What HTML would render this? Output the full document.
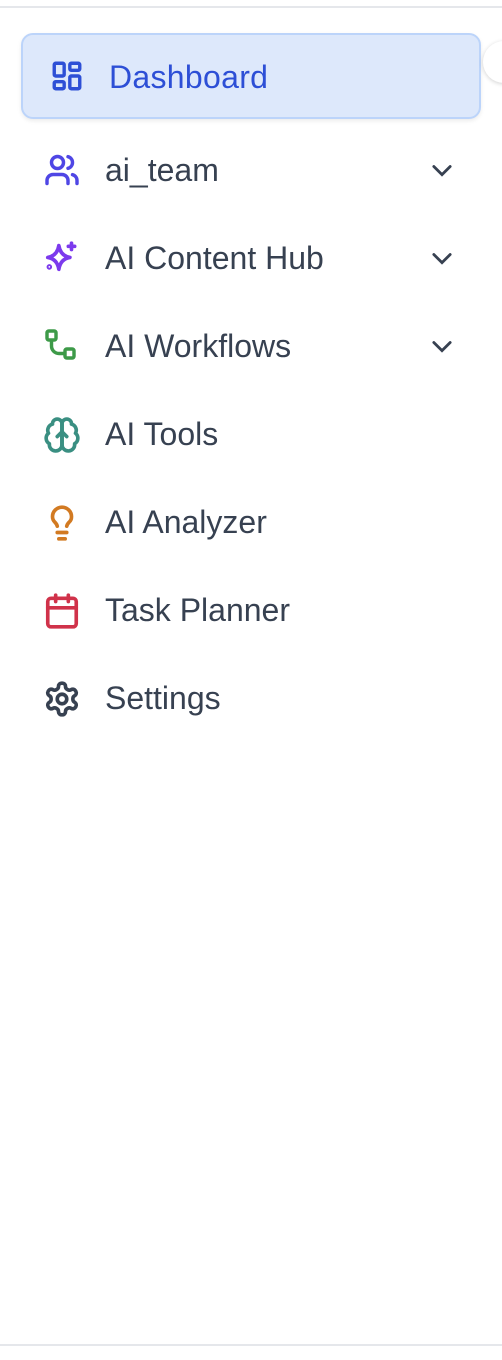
<!DOCTYPE html>
<html><head><style>
body{margin:0;width:502px;height:1360px;background:#fff;font-family:"Liberation Sans",Arial,sans-serif;position:relative;overflow:hidden}
.hl{position:absolute;left:0;width:502px;height:2px;background:#e5e7eb}
.dash{position:absolute;left:21px;top:33px;width:456px;height:82px;background:#dde8fb;border:2px solid #bcd4fa;border-radius:12px;box-shadow:0 2px 4px rgba(0,0,0,.08)}
.dash svg{position:absolute;left:27px;top:24px}
.dash span{position:absolute;left:86px;top:24px;font-size:32px;color:#2d4fd6;font-weight:500;letter-spacing:.3px}
.circ{position:absolute;left:483px;top:41px;width:42px;height:42px;border-radius:50%;background:#fff;box-shadow:0 1px 4px rgba(0,0,0,.18)}
.item{position:absolute;left:0;width:502px;height:40px}
.item svg.ic{position:absolute;left:43px;top:2px}
.item span{position:absolute;left:105px;top:2px;font-size:32px;color:#374151}
.item svg.ch{position:absolute;left:428px;top:6px}
</style></head><body>
<div class="hl" style="top:6px"></div>
<div class="hl" style="top:1344px"></div>
<div class="dash">
<svg width="34" height="34" viewBox="0 0 24 24" fill="none" stroke="#2d4fd6" stroke-width="2.4"><rect x="3" y="3" width="7" height="9" rx="1"/><rect x="14" y="3" width="7" height="5" rx="1"/><rect x="14" y="12" width="7" height="9" rx="1"/><rect x="3" y="16" width="7" height="5" rx="1"/></svg>
<span>Dashboard</span></div>
<div class="circ"></div>

<div class="item" style="top:150px"><svg class="ic" width="38" height="36" viewBox="0 0 24 24" fill="none" stroke="#4f46e5" stroke-width="2.3" stroke-linecap="round"><path d="M16 21v-2a4 4 0 0 0-4-4H6a4 4 0 0 0-4 4v2"/><circle cx="9" cy="7" r="4"/><path d="M22 21v-2a4 4 0 0 0-3-3.87M16 3.13a4 4 0 0 1 0 7.75"/></svg><span>ai_team</span><svg class="ch" width="28" height="28" viewBox="0 0 24 24" fill="none" stroke="#374151" stroke-width="2.4" stroke-linecap="round"><path d="M5 9l7 7 7-7"/></svg></div>

<div class="item" style="top:238px"><svg class="ic" width="38" height="38" viewBox="0 0 24 24" fill="none" stroke="#7c3aed" stroke-width="2.3" stroke-linecap="round" stroke-linejoin="round"><path d="M10 3.5 Q11 10 17 11 Q11 12 10 18.5 Q9 12 3 11 Q9 10 10 3.5Z"/><path d="M18 2v4M16 4h4"/><circle cx="4" cy="17" r=".6"/></svg><span>AI Content Hub</span><svg class="ch" width="28" height="28" viewBox="0 0 24 24" fill="none" stroke="#374151" stroke-width="2.4" stroke-linecap="round"><path d="M5 9l7 7 7-7"/></svg></div>

<div class="item" style="top:326px"><svg class="ic" width="38" height="36" viewBox="0 0 24 24" fill="none" stroke="#3d9a48" stroke-width="2.3" stroke-linejoin="round"><rect x="2" y="2" width="6" height="6" rx="1.2"/><rect x="14" y="14" width="6" height="6" rx="1.2"/><path d="M5 8v4a5 5 0 0 0 5 5h4"/></svg><span>AI Workflows</span><svg class="ch" width="28" height="28" viewBox="0 0 24 24" fill="none" stroke="#374151" stroke-width="2.4" stroke-linecap="round"><path d="M5 9l7 7 7-7"/></svg></div>

<div class="item" style="top:414px"><svg class="ic" width="38" height="38" viewBox="0 0 24 24" fill="none" stroke="#3a8f82" stroke-width="2.3" stroke-linecap="round" stroke-linejoin="round"><path d="M12 5a3 3 0 1 0-5.99.13 4 4 0 0 0-2.53 5.77 4 4 0 0 0 .56 6.6A4 4 0 1 0 12 18Z"/><path d="M12 5a3 3 0 1 1 5.99.13 4 4 0 0 1 2.53 5.77 4 4 0 0 1-.56 6.6A4 4 0 1 1 12 18Z"/><path d="M12 5v15M9 13l3-3 3 3"/></svg><span>AI Tools</span></div>

<div class="item" style="top:502px"><svg class="ic" width="38" height="38" viewBox="0 0 24 24" fill="none" stroke="#d27a22" stroke-width="2.3" stroke-linecap="round"><path d="M9 18h6M10 22h4"/><path d="M15 14c.2-1 .7-1.7 1.5-2.5A4.6 4.6 0 0 0 18 8 6 6 0 0 0 6 8c0 1 .2 2.2 1.5 3.5.8.8 1.3 1.5 1.5 2.5"/></svg><span>AI Analyzer</span></div>

<div class="item" style="top:590px"><svg class="ic" width="38" height="38" viewBox="0 0 24 24" fill="none" stroke="#d0324a" stroke-width="2.3" stroke-linecap="round"><rect x="3" y="4" width="18" height="18" rx="2"/><path d="M16 2v4M8 2v4M3 10h18"/></svg><span>Task Planner</span></div>

<div class="item" style="top:678px"><svg class="ic" width="38" height="38" viewBox="0 0 24 24" fill="none" stroke="#374151" stroke-width="2.3" stroke-linecap="round" stroke-linejoin="round"><path d="M12.22 2h-.44a2 2 0 0 0-2 2v.18a2 2 0 0 1-1 1.73l-.43.25a2 2 0 0 1-2 0l-.15-.08a2 2 0 0 0-2.730.73l-.22.38a2 2 0 0 0 .73 2.73l.15.1a2 2 0 0 1 1 1.72v.51a2 2 0 0 1-1 1.740l-.15.09a2 2 0 0 0-.73 2.73l.22.38a2 2 0 0 0 2.73.73l.15-.08a2 2 0 0 1 2 0l.43.25a2 2 0 0 1 1 1.73V20a2 2 0 0 0 2 2h.44a2 2 0 0 0 2-2v-.18a2 2 0 0 1 1-1.73l.43-.25a2 2 0 0 1 2 0l.15.08a2 2 0 0 0 2.73-.73l.22-.39a2 2 0 0 0-.73-2.73l-.15-.08a2 2 0 0 1-1-1.74v-.5a2 2 0 0 1 1-1.74l.15-.09a2 2 0 0 0 .73-2.73l-.22-.38a2 2 0 0 0-2.73-.73l-.15.08a2 2 0 0 1-2 0l-.43-.25a2 2 0 0 1-1-1.73V4a2 2 0 0 0-2-2z"/><circle cx="12" cy="12" r="3"/></svg><span>Settings</span></div>
</body></html>
